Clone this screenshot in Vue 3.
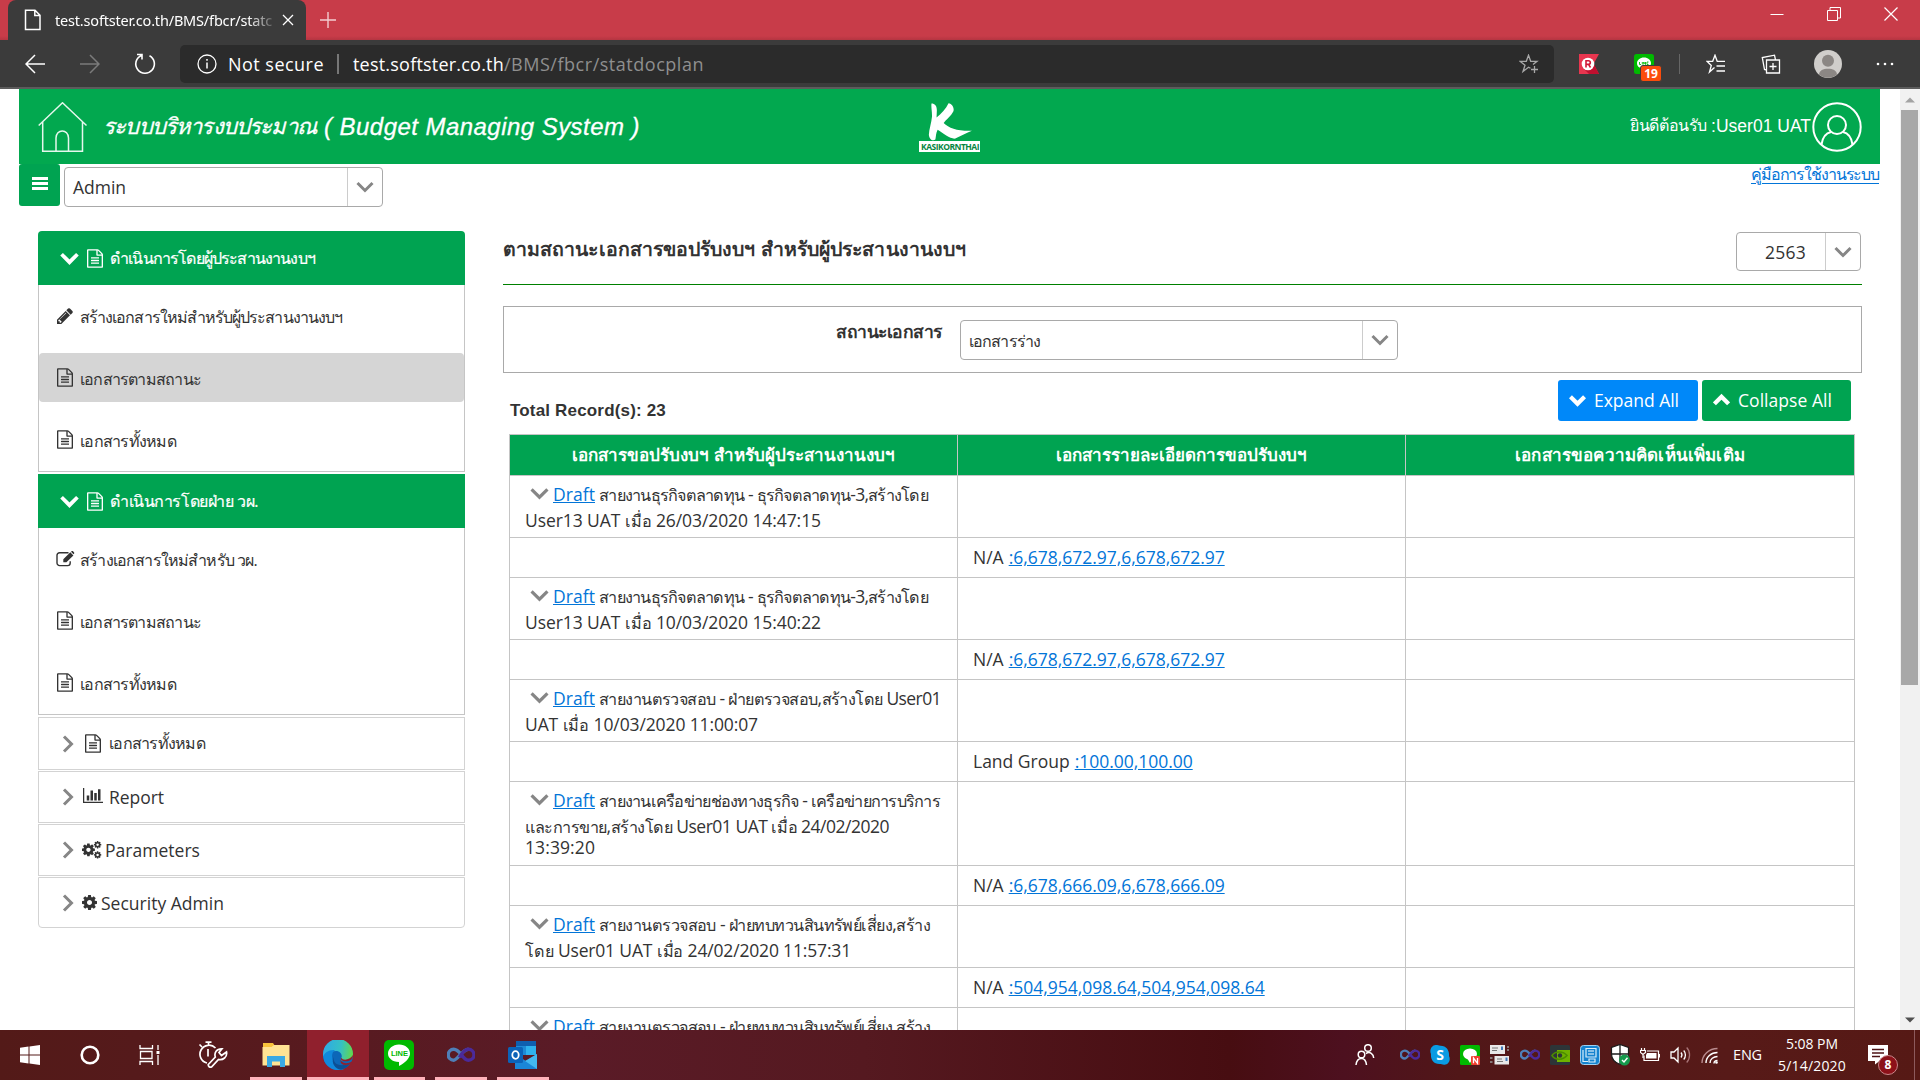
<script setup>
import { h } from 'vue'

// Tracks a run of text so that it fills the given width in pixels.
const vFit = {
  mounted(el, { value }) {
    if (!value) return
    const measure = (s) => {
      el.style.letterSpacing = s + 'px'
      return el.getBoundingClientRect().width
    }
    const w0 = measure(0)
    const w1 = measure(1)
    measure(((value - w0) / (w1 - w0)).toFixed(3))
  },
}

// Splits a mixed string so that Thai words can take their own size.
const runs = (s) => s.split(/([\u0e00-\u0e7f]+)/).filter(Boolean).map((t) => ({ t, thai: /[\u0e00-\u0e7f]/.test(t) }))

const glyphs = {
  file: 'M1596 380q28 28 48 76t20 88v1152q0 40-28 68t-68 28h-1344q-40 0-68-28t-28-68v-1600q0-40 28-68t68-28h896q40 0 88 20t76 48zm-444-244v376h376q-10-29-22-41l-313-313q-12-12-41-22zm384 1528v-1024h-416q-40 0-68-28t-28-68v-416h-768v1536h1280zm-1024-864q0-14 9-23t23-9h704q14 0 23 9t9 23v64q0 14-9 23t-23 9h-704q-14 0-23-9t-9-23v-64zm736 224q14 0 23 9t9 23v64q0 14-9 23t-23 9h-704q-14 0-23-9t-9-23v-64q0-14 9-23t23-9h704zm0 256q14 0 23 9t9 23v64q0 14-9 23t-23 9h-704q-14 0-23-9t-9-23v-64q0-14 9-23t23-9h704z',
  pencil: 'M491 1536l91-91-235-235-91 91v107h128v128h107zm523-928q0-22-22-22-10 0-17 7l-542 542q-7 7-7 17 0 22 22 22 10 0 17-7l542-542q7-7 7-17zm-54-192l416 416-832 832h-416v-416zm683 96q0 53-37 90l-166 166-416-416 166-165q36-38 90-38 53 0 91 38l235 234q37 39 37 91z',
  chart: 'M640 896v512h-256v-512h256zm384-512v1024h-256v-1024h256zm1024 1152v128h-2048v-1536h128v1408h1920zm-640-896v768h-256v-768h256zm384-384v1152h-256v-1152h256z',
  cog: 'M1152 896q0-106-75-181t-181-75-181 75-75 181 75 181 181 75 181-75 75-181zm512-109v222q0 12-8 23t-20 13l-185 28q-19 54-39 91 35 50 107 138 10 12 10 25t-9 23q-27 37-99 108t-94 71q-12 0-26-9l-138-108q-44 23-91 38-16 136-29 186-7 28-36 28h-222q-14 0-24.5-8.5t-11.5-21.5l-28-184q-49-16-90-37l-141 107q-10 9-25 9-14 0-25-11-126-114-165-168-7-10-7-23 0-12 8-23 15-21 51-66.5t54-70.5q-27-50-41-99l-183-27q-13-2-21-12.5t-8-23.5v-222q0-12 8-23t19-13l186-28q14-46 39-92-40-57-107-138-10-12-10-24 0-10 9-23 26-36 98.5-107.5t94.5-71.5q13 0 26 10l138 107q44-23 91-38 16-136 29-186 7-28 36-28h222q14 0 24.5 8.5t11.5 21.5l28 184q49 16 90 37l142-107q9-9 24-9 13 0 25 10 129 119 165 170 7 8 7 22 0 12-8 23-15 21-51 66.5t-54 70.5q26 50 41 98l183 28q13 2 21 12.5t8 23.5z',
}

const svg = (w, ht, box, kids) =>
  h('svg', { width: w, height: ht, viewBox: box, fill: 'currentColor', style: 'display:block;flex:none' }, kids)

const Glyph = ({ name }) => {
  if (name === 'file') return svg(16, 19, '128 0 1536 1792', [h('path', { d: glyphs.file })])
  if (name === 'pencil') return svg(16, 16, '128 128 1536 1536', [h('path', { d: glyphs.pencil })])
  if (name === 'chart') return svg(20, 15, '0 128 2048 1536', [h('path', { d: glyphs.chart })])
  if (name === 'cog') return svg(15, 15, '128 128 1536 1536', [h('path', { d: glyphs.cog })])
  if (name === 'cogs')
    return svg(20, 18, '0 0 20 18', [
      h('path', { d: glyphs.cog, transform: 'translate(-1.1 1.3) scale(.0084)' }),
      h('path', { d: glyphs.cog, transform: 'translate(11.3 -.6) scale(.0048)' }),
      h('path', { d: glyphs.cog, transform: 'translate(11.3 9.6) scale(.0048)' }),
    ])
  return svg(19, 16, '0 0 19 16', [
    h('path', {
      d: 'M12.5 1.7H3.6A2.6 2.6 0 0 0 1 4.300V12A2.600 2.600 0 0 0 3.600 14.600H11.600A2.600 2.600 0 0 0 14.200 12V10.300',
      fill: 'none',
      stroke: 'currentColor',
      'stroke-width': 1.4,
    }),
    h('path', { d: 'M14.300 1.300L17.400 4.400L10.400 11.300H7.300V8.200ZM15 .7l.8-.6h1l1.400 1.500v1l-.7.700z' }),
  ])
}
Glyph.props = ['name']

const Chevron = ({ dir, w, t }) =>
  svg(w, w, '0 0 18 18', [
    h('path', {
      d: { down: 'M1.500 5L9 12.500L16.500 5', up: 'M1.500 12.500L9 5L16.500 12.500', right: 'M5 1.500L12.500 9L5 16.500' }[dir],
      fill: 'none',
      stroke: 'currentColor',
      'stroke-width': t || 3,
    }),
  ])
Chevron.props = ['dir', 'w', 't']

const Infinity8 = ({ w }) =>
  svg(w, w * 0.56, '0 0 28 15.700', [
    h('path', { d: 'M14.500 7.800C11 3.500 9 2.300 6.700 2.300a5.500 5.500 0 0 0 0 11C10.500 13.300 15.500 2.300 21.500 2.300', fill: 'none', stroke: '#4f7fb8', 'stroke-width': 3.400 }),
    h('path', { d: 'M12.500 10.500C15 6 18 2.300 21.500 2.300a5.400 5.400 0 0 1 0 11c-3 0-5-2.500-7-5.500', fill: 'none', stroke: '#4b2a9a', 'stroke-width': 3.400 }),
  ])
Infinity8.props = ['w']

const groups = [
  {
    title: 'ดำเนินการโดยผู้ประสานงานงบฯ', w: 205,
    items: [
      { icon: 'pencil', text: 'สร้างเอกสารใหม่สำหรับผู้ประสานงานงบฯ', w: 262 },
      { icon: 'file', text: 'เอกสารตามสถานะ', w: 121, on: true },
      { icon: 'file', text: 'เอกสารทั้งหมด', w: 96 },
    ],
  },
  {
    title: 'ดำเนินการโดยฝ่าย วผ.', w: 148,
    items: [
      { icon: 'edit', text: 'สร้างเอกสารใหม่สำหรับ วผ.', w: 177 },
      { icon: 'file', text: 'เอกสารตามสถานะ', w: 121 },
      { icon: 'file', text: 'เอกสารทั้งหมด', w: 96 },
    ],
  },
]
const closed = [
  { icon: 'file', text: 'เอกสารทั้งหมด', w: 96, cls: 'c1' },
  { icon: 'chart', text: 'Report', w: 55, cls: 'c2' },
  { icon: 'cogs', text: 'Parameters', w: 95, cls: 'c3' },
  { icon: 'cog', text: 'Security Admin', w: 123, cls: 'c4' },
]

const heads = [
  ['เอกสารขอปรับงบฯ สำหรับผู้ประสานงานงบฯ', 323],
  ['เอกสารรายละเอียดการขอปรับงบฯ', 251],
  ['เอกสารขอความคิดเห็นเพิ่มเติม', 230],
]
const docs = [
  { lines: [['สายงานธุรกิจตลาดทุน - ธุรกิจตลาดทุน-3,สร้างโดย', 329], ['User13 UAT เมื่อ 26/03/2020 14:47:15', 296]], who: 'N/A', sum: ':6,678,672.97,6,678,672.97', w: 216 },
  { lines: [['สายงานธุรกิจตลาดทุน - ธุรกิจตลาดทุน-3,สร้างโดย', 329], ['User13 UAT เมื่อ 10/03/2020 15:40:22', 296]], who: 'N/A', sum: ':6,678,672.97,6,678,672.97', w: 216 },
  { lines: [['สายงานตรวจสอบ - ฝ่ายตรวจสอบ,สร้างโดย User01', 342], ['UAT เมื่อ 10/03/2020 11:00:07', 233]], who: 'Land Group', sum: ':100.00,100.00', w: 118 },
  { lines: [['สายงานเครือข่ายช่องทางธุรกิจ - เครือข่ายการบริการ', 341], ['และการขาย,สร้างโดย User01 UAT เมื่อ 24/02/2020', 364], ['13:39:20', 70]], who: 'N/A', sum: ':6,678,666.09,6,678,666.09', w: 216 },
  { lines: [['สายงานตรวจสอบ - ฝ่ายทบทวนสินทรัพย์เสี่ยง,สร้าง', 331], ['โดย User01 UAT เมื่อ 24/02/2020 11:57:31', 326]], who: 'N/A', sum: ':504,954,098.64,504,954,098.64', w: 256 },
  { lines: [['สายงานตรวจสอบ - ฝ่ายทบทวนสินทรัพย์เสี่ยง,สร้าง', 331]] },
]
</script>

<template>
  <div class="screen">
    <div class="tabs">
      <div class="tab">
        <svg class="doc" width="18" height="22" viewBox="0 0 18 22" fill="none" stroke="#fff" stroke-width="1.500"><path d="M1.500 1.200H11L16 6.300V20.500H1.500ZM10.800 1.200V6.500H16" /></svg>
        <span class="tabtext"><span v-fit="217">test.softster.co.th/BMS/fbcr/statc</span></span>
        <svg width="12" height="12" viewBox="0 0 12 12" stroke="#fff" stroke-width="1.300"><path d="M1 1L11 11M11 1L1 11" /></svg>
      </div>
      <svg class="plus" width="18" height="18" viewBox="0 0 18 18" stroke="#f3cdd1" stroke-width="1.400"><path d="M9 1V17M1 9H17" /></svg>
      <div class="winbtns">
        <svg width="14" height="14" viewBox="0 0 14 14" stroke="#fff"><path d="M.5 7.500H13.500" /></svg>
        <svg width="14" height="14" viewBox="0 0 14 14" fill="none" stroke="#fff"><path d="M.5 3.500H10.500V13.500H.5ZM3 3V.5H13.500V11H11" /></svg>
        <svg width="14" height="14" viewBox="0 0 14 14" stroke="#fff" stroke-width="1.200"><path d="M.5 .5L13.500 13.500M13.500 .5L.5 13.500" /></svg>
      </div>
    </div>

    <div class="toolbar">
      <svg class="nav" width="20" height="20" viewBox="0 0 20 20" fill="none" stroke="#fff" stroke-width="1.500"><path d="M20 10H1M10 1L1 10L10 19" /></svg>
      <svg class="nav" width="20" height="20" viewBox="0 0 20 20" fill="none" stroke="#7b7b7b" stroke-width="1.500"><path d="M0 10H19M10 1L19 10L10 19" /></svg>
      <svg class="nav" width="22" height="22" viewBox="0 0 22 22" fill="none" stroke="#fff" stroke-width="1.600"><path d="M15.500 2.700A9.300 9.300 0 1 1 7.300 2.400M3 1.500H8V6.500" /></svg>
      <div class="address">
        <svg width="20" height="20" viewBox="0 0 20 20" fill="none" stroke="#fff" stroke-width="1.300"><circle cx="10" cy="10" r="9" /><path d="M10 8.500V14.500M10 5V6.800" stroke-width="1.500" /></svg>
        <span class="ns" v-fit="96">Not secure</span>
        <i class="bar"></i>
        <span class="host" v-fit="151">test.softster.co.th</span>
        <span class="path" v-fit="200">/BMS/fbcr/statdocplan</span>
        <svg class="star" width="20" height="20" viewBox="0 0 20 20" fill="none" stroke="#a8a8a8" stroke-width="1.300"><path d="M11.500 14.300L9.500 13.200L4 17.500L6 11.200L1 7.300H7.300L9.500 1.200L11.700 7.300H18L14 10.500M15.500 12V19M12 15.500H19" /></svg>
      </div>
      <div class="exts">
        <svg class="e1" width="20" height="20" viewBox="0 0 20 20"><path d="M0 0H20L14.500 10L20 20H0Z" fill="#e8364f" /><path d="M13 6L16 12L20 20H10L4 14Z" fill="#c0102f" /><circle cx="9" cy="10" r="6.300" fill="#fff" /><path d="M7 13.500V6.800H9.500A1.800 1.800 0 0 1 9.500 10.400H7.500M9.500 10.400L11.500 13.500" fill="none" stroke="#d01838" stroke-width="1.600" /></svg>
        <div class="lineext">
          <svg width="20" height="20" viewBox="0 0 20 20"><rect width="20" height="20" rx="2.500" fill="#00b900" /><path d="M10 3.500c4 0 7 2.500 7 5.700 0 3-3 5-6.500 7v-1.500C6 14.500 3 12.500 3 9.200 3 6 6 3.500 10 3.500Z" fill="#fff" /><path d="M5.500 8V10.500H7M8.300 8V10.500M9.700 10.500V8L11.500 10.500V8M14.500 8H13V10.500H14.500" stroke="#00b900" fill="none" stroke-width=".9" /></svg>
          <b class="n19">19</b>
        </div>
        <i class="vsep"></i>
        <svg class="e3" width="20" height="20" viewBox="0 0 20 20" fill="none" stroke="#fff" stroke-width="1.300"><path d="M8.500 13.500L3.500 18L5.300 11.500L1 7.300H6.700L9 1.200L11.200 7.300H19M10.500 12H19M10.500 17H19" /></svg>
        <svg class="e4" width="20" height="20" viewBox="0 0 20 20" fill="none" stroke="#fff" stroke-width="1.300"><path d="M5.500 6H18.500V19H5.500ZM12 9V16M8.500 12.500H15.500M5.500 16L3.500 15.500L1.300 3.500L13.500 1.200L14.500 6" /></svg>
        <svg class="e5" width="28" height="28" viewBox="0 0 28 28"><circle cx="14" cy="14" r="14" fill="#d0cecb" /><circle cx="14" cy="10.700" r="6" fill="#8b8784" /><path d="M5 24.500C5.500 20.500 9 18.800 14 18.800S22.500 20.500 23 24.500A14 14 0 0 1 5 24.500Z" fill="#8b8784" /></svg>
        <svg class="e6" width="18" height="4" viewBox="0 0 18 4" fill="#fff"><circle cx="2" cy="2" r="1.300" /><circle cx="9" cy="2" r="1.300" /><circle cx="16" cy="2" r="1.300" /></svg>
      </div>
    </div>

    <div class="view">
      <div class="page">
        <header class="banner">
          <svg class="house" width="50" height="50" viewBox="0 0 50 50" fill="none" stroke="#e6f7ed" stroke-width="1.500"><path d="M.7 23.500L24.500 .8L48.500 23.500M4.700 20V49.200H44.500V20M18 49V36C18 26.500 30.500 26.500 30.500 36V49" /></svg>
          <h1><span v-fit="213">ระบบบริหารงบประมาณ</span><span class="en" v-fit="316">( Budget Managing System )</span></h1>
          <div class="logo">
            <svg width="46" height="39" viewBox="0 0 46 39" fill="#fff"><path d="M4 .5C7.500 .5 9.700 3 9.500 8L9.200 15C14 11 19 6 21.500 .2C25.500 1 27.500 5 26.500 8.500C24.500 13 19 17 16.500 20.500C22 26 31 29 45.500 28.500C40 31 34 33.500 28.500 36.500C24 37.500 16 31 10.300 27.500C8.500 31 8.700 34 8 37.500C5 39.500 1.700 37 1.300 32.500C1.500 27 4 20 4.500 14C4.700 8 3.500 5 4 .5Z" /></svg>
            <span class="kas"><span v-fit="58">KASIKORNTHAI</span></span>
          </div>
          <div class="welcome"><span v-fit="77">ยินดีต้อนรับ</span><span class="usr" v-fit="100">:User01 UAT</span></div>
          <svg class="user" width="50" height="50" viewBox="0 0 50 50" fill="none" stroke="#fff" stroke-width="2"><circle cx="25" cy="25" r="23.700" /><circle cx="25" cy="23" r="9" /><path d="M9.500 42.500C10.500 36 14 31 19 30M40.500 42.500C39.500 36 36 31 31 30" /></svg>
        </header>
        <div class="subbar">
          <div class="left">
            <div class="burger"><i></i><i></i><i></i></div>
            <div class="select admin"><span class="val" v-fit="53">Admin</span><span class="arr"><Chevron dir="down" :w="18" /></span></div>
          </div>
          <a class="manual"><span v-fit="128">คู่มือการใช้งานระบบ</span></a>
        </div>

        <div class="cols">
          <aside class="side">
            <section v-for="g in groups" :key="g.title" class="group">
              <div class="ghead"><Chevron dir="down" :w="19" :t="3.600" /><Glyph class="fi" name="file" /><span v-fit="g.w">{{ g.title }}</span></div>
              <div class="gbody">
                <div v-for="i in g.items" :key="i.text" class="item" :class="{ on: i.on }"><span class="ic"><Glyph :name="i.icon" /></span><span class="tx" v-fit="i.w">{{ i.text }}</span></div>
              </div>
            </section>
            <div v-for="c in closed" :key="c.text" class="closed" :class="c.cls"><span class="ch"><Chevron dir="right" :w="18" /></span><Glyph class="gi" :name="c.icon" /><span class="tx" v-fit="c.w">{{ c.text }}</span></div>
          </aside>

          <main class="main">
            <div class="titlebar">
              <h2><span v-fit="463">ตามสถานะเอกสารขอปรับงบฯ สำหรับผู้ประสานงานงบฯ</span></h2>
              <div class="select year"><span class="val" v-fit="41">2563</span><span class="arr"><Chevron dir="down" :w="18" /></span></div>
            </div>
            <div class="filter">
              <span class="label"><span v-fit="106">สถานะเอกสาร</span></span>
              <div class="select status"><span class="val" v-fit="71">เอกสารร่าง</span><span class="arr"><Chevron dir="down" :w="18" /></span></div>
            </div>
            <div class="actions">
              <b class="total"><span v-fit="156">Total Record(s): 23</span></b>
              <div class="btn blue"><Chevron dir="down" :w="17" :t="4.500" /><span v-fit="85">Expand All</span></div>
              <div class="btn green"><Chevron dir="up" :w="17" :t="4.500" /><span v-fit="94">Collapse All</span></div>
            </div>
            <div class="grid">
              <div class="tr th"><div v-for="t in heads" :key="t[0]" class="td"><span v-fit="t[1]">{{ t[0] }}</span></div></div>
              <template v-for="(d, n) in docs" :key="n">
                <div class="tr doc">
                  <div class="td">
                    <div v-for="(l, k) in d.lines" :key="k" class="ln" :class="'l' + k">
                      <template v-if="k === 0"><Chevron class="dc" dir="down" :w="19" /><a class="draft" v-fit="42">Draft</a></template><span v-fit="l[1]"><span v-for="(r, j) in runs(l[0])" :key="j" :class="{ thai: r.thai }">{{ r.t }}</span></span>
                    </div>
                  </div>
                  <div class="td"></div><div class="td"></div>
                </div>
                <div v-if="d.sum" class="tr sum">
                  <div class="td"></div>
                  <div class="td"><span class="who">{{ d.who }}</span><a v-fit="d.w">{{ d.sum }}</a></div>
                  <div class="td"></div>
                </div>
              </template>
            </div>
          </main>
        </div>
      </div>
      <div class="scroll">
        <svg class="up" width="10" height="6" viewBox="0 0 10 6"><path d="M0 5.500L5 .5L10 5.500Z" fill="#a3a3a3" /></svg>
        <div class="thumb"></div>
        <svg class="dn" width="10" height="6" viewBox="0 0 10 6"><path d="M0 .5L5 5.500L10 .5Z" fill="#505050" /></svg>
      </div>
    </div>

    <div class="taskbar">
      <div class="tcell t60"><svg width="20" height="20" viewBox="0 0 20 20" fill="#fff"><path d="M0 2.800L8.500 1.600V9.500H0ZM9.500 1.400L20 0V9.500H9.500ZM0 10.500H8.500V18.400L0 17.200ZM9.500 10.500H20V20L9.500 18.600Z" /></svg></div>
      <div class="tcell t60"><svg width="20" height="20" viewBox="0 0 20 20"><circle cx="10" cy="10" r="8.300" fill="none" stroke="#fff" stroke-width="2.600" /></svg></div>
      <div class="tcell t60"><svg width="22" height="20" viewBox="0 0 22 20" fill="none" stroke="#fff" stroke-width="1.300"><path d="M1 0V3.500H13.500V0M1 20V16.500H13.500V20M1.500 6.500H13V13.500H1.500ZM19 0V5M19 10V20" /><path d="M17.500 6H20.500V9H17.500Z" fill="#fff" stroke="none" /></svg></div>
      <div class="tcell t66"><svg width="30" height="28" viewBox="0 0 30 28" fill="none" stroke="#fff" stroke-width="1.700"><path d="M7.500 1.200H13.500M10.500 1V4.500M1.500 3.500L4 6M9 22A9 9 0 1 1 17.500 7M10 8V15.500" /><path d="M10.300 23.500L17.300 16C16 12 18.500 7.500 24 7.800L21 11.500L23.500 14.500L28.500 11C29.500 16 25 19.500 20.500 18.500L13.500 26A2.300 2.300 0 0 1 10.300 23.500Z" stroke-width="1.700" /></svg></div>
      <div class="tcell run"><svg width="28" height="24" viewBox="0 0 28 24"><path d="M1 0H11L13 3H27V22H1Z" fill="#f8c33c" /><path d="M.5 4H9.500L12 2H27.500V22.500H.5Z" fill="#ffe394" /><path d="M5 24V13H23V24H18V18.500H10V24Z" fill="#39a9e4" /></svg></div>
      <div class="tcell run active"><svg width="30" height="30" viewBox="0 0 30 30"><defs><linearGradient id="eg" x1="0" y1=".3" x2="1" y2=".4"><stop offset="0" stop-color="#2fa8e6" /><stop offset=".6" stop-color="#35c1c4" /><stop offset="1" stop-color="#62d84e" /></linearGradient></defs><circle cx="15" cy="15" r="15" fill="#0c67b8" /><path d="M0 14A15 15 0 0 1 30 14C30 19 26 21 22 21C17 21 17.500 19 18.500 17.500C19.500 15 17.500 11 13 11C6 11 1 15 .2 17Z" fill="url(#eg)" /><path d="M.2 17C1 12.500 6 9.500 12 10C7.500 13 8 22 15 27C17 28.500 20 29 22 28.500A15 15 0 0 1 .2 17Z" fill="#1089dc" /><path d="M10.500 17C10 24 16 27.500 27 23.500C25 26.500 22 29 18 29.700C12 29 8 23 10.500 17Z" fill="#0c4f94" /><path d="M30 15C30 20 26 21.500 22 21.300C18 21 17.300 19.500 18.300 17.800C20 21 27 20 30 15ZM17.500 20C20 24 25 24 28.600 21.500L31 27L27 24C22 26 17 25 17.500 20Z" fill="#90202d" /></svg></div>
      <div class="tcell run"><svg width="30" height="30" viewBox="0 0 30 30"><rect width="30" height="30" rx="5" fill="#00b900" /><path d="M15 4.500c6.500 0 11 4 11 9 0 4.500-4.500 9-11 12.500v-4C8 21.800 4 18 4 13.500s4.500-9 11-9Z" fill="#fff" /></svg><b class="lintext">LINE</b></div>
      <div class="tcell run"><Infinity8 :w="28" /></div>
      <div class="tcell run"><svg width="30" height="28" viewBox="0 0 30 28"><path d="M8 0H28V14H8Z" fill="#0f5fb0" /><path d="M8 5H18V14H8Z" fill="#1e8ad6" /><path d="M18 5H28V14H18Z" fill="#2fb2ee" /><path d="M7 13L18 20L29 13V28H7Z" fill="#1a86d8" /><path d="M29 13V28L17 20Z" fill="#43b8f0" /><rect y="6" width="15" height="16" rx="1.500" fill="#0c63b8" /><ellipse cx="7.500" cy="14" rx="3.200" ry="3.800" fill="none" stroke="#fff" stroke-width="1.800" /></svg></div>

      <div class="tray">
        <div class="people"><svg width="20" height="22" viewBox="0 0 20 22" fill="none" stroke="#fff" stroke-width="1.500"><circle cx="6.500" cy="10.500" r="3.300" /><path d="M1 21C1.500 16.500 3.500 14.500 6.500 14.500S11 16.500 11.500 21" /><circle cx="13" cy="4" r="3.300" /><path d="M11 9.500C15 7 18.500 10 18.700 14" /></svg></div>
        <div class="tc"><Infinity8 :w="20" /></div>
        <div class="tc"><svg width="20" height="20" viewBox="0 0 20 20"><path d="M5.500 0C8 0 8.500 .5 10.500 .7C17 .8 19.500 6 19 11C21 15 18.500 19.500 14.500 19.700C12 19.800 11.500 19 9.500 19C3 19 .5 14 1 9C-1 5 2 0 5.500 0Z" fill="#0a9be3" /></svg><b class="sk">S</b></div>
        <div class="tc"><svg width="20" height="20" viewBox="0 0 20 20"><rect width="20" height="20" rx="1.500" fill="#00b900" /><ellipse cx="10" cy="9" rx="7" ry="5.600" fill="#fff" /><path d="M7 13L10 18L13 13Z" fill="#fff" /><rect x="11" y="11" width="9" height="9" rx="1" fill="#f04030" /><path d="M13.500 18.300V13L17.500 18.300V13" fill="none" stroke="#fff" stroke-width="1.300" /></svg></div>
        <div class="tc"><svg width="20" height="20" viewBox="0 0 20 20"><path d="M0 0H15V9H0ZM4.500 11H19V19.500H4.500Z" fill="#e8e8e8" /><path d="M2 3H8M2 5.500H7M7 14H12M7 16.500H13" stroke="#777" /><path d="M11 1.500H13V5H11ZM15.500 12.500H17.500V16H15.500Z" fill="#4179b8" /><path d="M17 2H19M17 5H19M0 13H2.500M0 17H2.500" stroke="#999" stroke-width="1.500" /></svg></div>
        <div class="tc"><Infinity8 :w="20" /></div>
        <div class="tc"><svg width="20" height="20" viewBox="0 0 20 20"><rect width="20" height="20" rx="1.500" fill="#2d3538" /><path d="M7 5H20V17H7Z" fill="#6fb200" /><path d="M2 10.500C5 6 13 5.500 17 10.500C12 16 5 15 2 10.500Z" fill="none" stroke="#4b8b00" stroke-width="1.600" /><circle cx="10" cy="10.500" r="2.200" fill="#2d3538" /></svg></div>
        <div class="tc"><svg width="20" height="20" viewBox="0 0 20 20"><rect x=".5" y=".5" width="19" height="19" rx="3" fill="#1583cf" stroke="#9fd0f0" /><path d="M6 3.500H16V12H6ZM3 5V16.500H8M9 14H15V17H9Z" fill="none" stroke="#d8eefb" stroke-width="1.200" /><path d="M8 6H14M8 9H14" stroke="#fff" /></svg></div>
        <div class="tc"><svg width="20" height="22" viewBox="0 0 20 22"><path d="M10 .5L18.500 3.500V10C18.500 15 15 18.500 10 20.500C5 18.500 1.500 15 1.500 10V3.500Z" fill="#fff" stroke="#1b1b1b" stroke-width="1.200" /><path d="M10 1V20M2 10H18" stroke="#1b1b1b" stroke-width="1.300" /><circle cx="14.500" cy="16" r="5.500" fill="#159a4c" /><path d="M12 16L14 18L17.500 13.800" stroke="#fff" fill="none" stroke-width="1.400" /></svg></div>
        <div class="tc"><svg width="20" height="14" viewBox="0 0 20 14" fill="none" stroke="#fff" stroke-width="1.200"><path d="M1.500 0V2M4.500 0V2M.5 2.500H5.500V4.500L3 6.500L.5 4.500ZM3 6.500V10" /><path d="M7 3H18.500V12.500H4V7.500M19.500 6V9.500" /><path d="M7 5H16.500V10.500H6V7Z" fill="#fff" stroke="none" /></svg></div>
        <div class="tc"><svg width="21" height="18" viewBox="0 0 21 18" fill="none" stroke="#fff" stroke-width="1.300"><path d="M1 6H4L8 2V16L4 12H1ZM11 6.500C12.200 8 12.200 10 11 11.500M13.700 4.500C16 7 16 11 13.700 13.500" /><path d="M16.700 1.500C20.500 5.500 20.500 12.500 16.700 16.500" stroke="#a87578" /></svg></div>
        <div class="tc"><svg width="18" height="17" viewBox="0 0 18 17" fill="none" stroke="#fff" stroke-width="1.400"><path d="M1 16C1 8 8 1.500 16.500 1.500" stroke="#b98b8e" /><path d="M5 16C5 10 10 5.500 16.500 5.500M9 16C9 12 12.500 9.500 16.500 9.500M13 16.500C13 14.500 14.500 13.500 16.500 13.500" /><circle cx="15.500" cy="15.500" r="1.300" fill="#fff" stroke="none" /></svg></div>
        <span class="eng"><span v-fit="29">ENG</span></span>
        <div class="clock"><div><span v-fit="52">5:08 PM</span></div><div><span v-fit="68">5/14/2020</span></div></div>
        <div class="notif"><svg width="20" height="20" viewBox="0 0 20 20"><path d="M0 0H20V16H11.500L7 19.500V16H0Z" fill="#fff" /><path d="M4 4.500H16M4 8H16M4 11.500H12" stroke="#4d1215" stroke-width="1.300" /></svg><b class="n8">8</b></div>
        <i class="desk"></i>
      </div>
    </div>
  </div>
</template>

<style>
body { background: #fff; overflow: hidden; }
</style>

<style scoped>
* { box-sizing: border-box; }
.screen { width: 1920px; height: 1080px; overflow: hidden; display: flex; flex-direction: column; font-family: "Open Sans", "Noto Sans", sans-serif; font-size: 17.5px; color: #333; white-space: nowrap; }
svg { flex: none; display: block; }
h1, h2 { margin: 0; font-weight: 400; }

.tabs { height: 40px; flex: none; background: linear-gradient(#c83c49 36px, #b43541); display: flex; align-items: center; color: #fff; }
.tab { width: 298px; height: 40px; margin-left: 8px; background: #3b3b3b; border-radius: 8px 8px 0 0; display: flex; align-items: center; padding-left: 16px; }
.tabtext { margin-left: 13px; width: 219px; overflow: hidden; font: 14.500px/20px "Noto Sans", sans-serif; margin-right: 8px; -webkit-mask-image: linear-gradient(90deg, #000 88%, transparent 102%); mask-image: linear-gradient(90deg, #000 88%, transparent 102%); }
.plus { margin-left: 13px; }
.winbtns { margin-left: auto; display: flex; gap: 43px; padding-right: 22px; margin-bottom: 12px; }
.toolbar { height: 49px; flex: none; background: #3b3b3b; border-bottom: 2px solid #5c5c5c; display: flex; align-items: center; }
.nav { margin-left: 25px; margin-right: 10px; }
.nav + .nav { margin-left: 25px; }
.nav:nth-child(3) { margin-left: 24px; }
.address { width: 1374px; height: 38px; margin-left: 14px; margin-top: 1px; background: #2b2b2b; border-radius: 5px; display: flex; align-items: center; padding-left: 17px; font: 18px/36px "Open Sans", sans-serif; color: #fff; }
.ns { margin-left: 11px; }
.bar { width: 2px; height: 20px; background: #777; margin: 0 14px 0 13px; }
.path { color: #8f8f8f; }
.star { margin-left: auto; margin-right: 15px; }
.exts { display: flex; align-items: center; }
.e1 { margin-left: 25px; }
.lineext { position: relative; margin-left: 35px; }
.n19 { position: absolute; left: 6px; top: 11px; width: 22px; height: 17px; border: 1px solid #3b3b3b; border-radius: 3px; background: #fb4c0c; color: #fff; font: 700 12px/15px "Open Sans", sans-serif; text-align: center; }
.vsep { width: 1px; height: 20px; background: #666; margin: 0 26px 0 25px; }
.e4 { margin-left: 35px; }
.e5 { margin-left: 33px; }
.e6 { margin-left: 34px; }

.view { flex: 1; min-height: 0; display: flex; background: #fff; }
.page { width: 1900px; padding-left: 19px; overflow: hidden; flex: none; }
.banner { width: 1861px; height: 75px; background: #02a84f; display: flex; align-items: flex-start; color: #fff; padding-top: 13px; }
.house { margin-left: 19px; }
h1 { margin-left: 15px; font: italic 24px/50px "Liberation Sans", sans-serif; width: 537px; margin-right: 279px; display: flex; justify-content: space-between; -webkit-text-stroke: .3px #fff; }
h1 span:first-child { font-size: 22px; }
.logo { display: flex; flex-direction: column; width: 61px; height: 50px; margin-top: 1px; }
.logo svg { margin-left: 8px; height: 38px; }
.kas { background: #fff; color: #06863f; height: 11px; width: 61px; font: 700 8.500px/11px "Open Sans", sans-serif; padding-left: 2px; }
.welcome { margin-left: 650px; width: 181px; display: flex; justify-content: space-between; font: 17.500px/48px "Liberation Sans", sans-serif; }
.welcome span:first-child { font-size: 16px; }
.user { margin-left: 1px; }
.subbar { display: flex; justify-content: space-between; height: 67px; width: 1861px; }
.left { display: flex; }
.burger { width: 41px; height: 42px; background: #00a351; border-radius: 3px; display: flex; flex-direction: column; gap: 2px; align-items: center; padding-top: 13px; }
.burger i { width: 16px; height: 3px; background: #fff; }
.select { display: flex; border: 1px solid #a9a9a9; border-radius: 4px; background: #fff; height: 40px; }
.val { line-height: 38px; padding: 0; }
.arr { width: 35px; border-left: 1px solid #ccc; margin-left: auto; display: flex; align-items: center; justify-content: center; color: #868686; }
.admin { width: 319px; margin: 3px 0 0 4px; padding-left: 8px; }
.manual { color: #0275d8; text-decoration: underline; font: 16px/30px "Liberation Sans", sans-serif; margin: -4px 1px 0 0; text-underline-offset: 3px; }

.cols { display: flex; }
.side { width: 427px; margin-left: 19px; flex: none; }
.group { margin-bottom: 2px; }
.ghead { height: 54px; background: #00a351; color: #fff; display: flex; align-items: center; padding-left: 22px; font-size: 16px; line-height: 56px; -webkit-text-stroke: .2px #fff; }
.group:first-child .ghead { border-radius: 4px 4px 0 0; }
.fi { margin: 0 7px 0 8px; }
.gbody { border: 1px solid #c5c5c5; border-top: 0; height: 187px; padding-top: 6px; }
.item { height: 49px; margin-bottom: 13px; border-radius: 4px; display: flex; line-height: 53px; padding-left: 17px; font-size: 16px; }
.item.on { background: #d5d5d5; }
.ic { width: 18px; margin-right: 6px; padding-top: 15px; display: flex; justify-content: center; }
.item:first-child .ic { padding-top: 17px; }
.closed { height: 52px; margin-bottom: 1px; border: 1px solid #d3d3d3; display: flex; align-items: center; padding-left: 20px; line-height: 50px; }
.closed.c1 { height: 53px; font-size: 16px; line-height: 53px; }
.closed:last-child { border-radius: 0 0 4px 4px; height: 51px; }
.ch { color: #868686; margin-right: 5px; width: 18px; }
.c1 .gi { margin: 0 8px 0 3px; }
.c2 .gi { margin: 0 6px 3px 1px; }
.c3 .gi { margin: 0 3px 0 0; }
.c4 .gi { margin: 0 4px 0 0; }

.main { width: 1359px; margin-left: 38px; }
.titlebar { height: 54px; border-bottom: 1px solid #008000; display: flex; justify-content: space-between; padding-right: 1px; }
h2 { font: 700 19.500px/36px "Liberation Sans", sans-serif; }
.year { width: 125px; height: 39px; margin-top: 1px; padding-left: 28px; }
.filter { margin-top: 21px; height: 67px; border: 1px solid #a9a9a9; display: flex; padding-left: 332px; }
.label { font: 700 17.500px/50px "Liberation Sans", sans-serif; }
.status { width: 438px; margin: 13px 0 0 18px; padding-left: 8px; }
.status .val { font-size: 16px; line-height: 40px; }
.actions { height: 48px; margin-top: 7px; padding-left: 7px; display: flex; }
.total { font: 700 17px/62px "Liberation Sans", sans-serif; width: 1048px; }
.btn { height: 41px; border-radius: 3px; color: #fff; display: flex; align-items: center; padding-left: 11px; font-size: 17.500px; padding-bottom: 1px; }
.btn svg { margin-right: 8px; }
.blue { background: #0088f9; width: 140px; }
.green { background: #00a351; width: 149px; margin-left: 4px; }
.grid { margin: 6px 0 0 6px; width: 1346px; border-top: 1px solid #c5c5c5; border-left: 1px solid #c5c5c5; }
.tr { display: flex; }
.td { width: 448px; border-right: 1px solid #c5c5c5; border-bottom: 1px solid #c5c5c5; padding-left: 15px; }
.td:last-child { width: 449px; }
.th .td { background: #00a351; color: #fff; height: 41px; padding: 0; text-align: center; font: 700 17px/42px "Liberation Sans", sans-serif; }
.doc .td { padding-top: 4px; padding-bottom: 5px; }
.ln { height: 26px; line-height: 28px; display: flex; }
.thai { font-size: 16.200px; }
.l0 { padding-left: 5px; }
.l2 { height: 22px; line-height: 19px; }
.dc { color: #868686; margin: 4px 4px 0 0; }
a { color: #0275d8; text-decoration: underline; }
.draft { margin-right: 4px; }
.sum .td { height: 40px; line-height: 39px; }
.who { margin-right: 5px; }

.scroll { width: 20px; background: #f1f1f1; display: flex; flex-direction: column; align-items: center; padding: 8px 1px 7px 0; flex: none; }
.thumb { width: 17px; height: 575px; background: #a8a8a8; margin-top: 7px; }
.dn { margin-top: auto; }

.taskbar { height: 50px; flex: none; background: linear-gradient(90deg, #531a18, #571a1e 14%, #5a1b27 30%, #551920 45%, #470d11 64%, #4d101f 70%, #511718 76%, #571a18 90%, #561915); display: flex; }
.tcell { height: 50px; width: 62px; display: flex; align-items: center; justify-content: center; position: relative; }
.t60 { width: 60px; }
.t66 { width: 65px; }
.tcell.run { width: 61.800px; }
.run::after { content: ""; position: absolute; left: 5px; right: 5px; bottom: 0; height: 3px; background: #ffb3bb; }
.active { background: #90202d; }
.active::after { left: 0; right: 0; }
.lintext { position: absolute; left: 0; right: 0; top: 17px; text-align: center; color: #00b900; font: 700 7.500px/14px "Liberation Sans", sans-serif; }
.tray { margin-left: auto; display: flex; align-items: center; color: #fff; height: 50px; }
.people { width: 40px; margin-right: 10px; display: flex; justify-content: center; }
.tc { width: 30px; display: flex; justify-content: center; position: relative; }
.sk { position: absolute; inset: 0; text-align: center; font: 700 14px/20px "Open Sans", sans-serif; }
.eng { margin-left: 8px; width: 29px; font: 14.500px/50px "Open Sans", sans-serif; }
.clock { width: 98px; margin-left: 1px; text-align: center; font: 14px/22px "Open Sans", sans-serif; }
.notif { margin-left: 7px; width: 46px; position: relative; }
.n8 { position: absolute; left: 10px; top: 10px; width: 20px; height: 20px; border-radius: 50%; background: #8d1119; border: 1px solid #c9868a; color: #fff; font: 700 12px/18px "Open Sans", sans-serif; text-align: center; }
.desk { width: 1px; height: 50px; background: #8d5a5c; margin-right: 5px; }
</style>
